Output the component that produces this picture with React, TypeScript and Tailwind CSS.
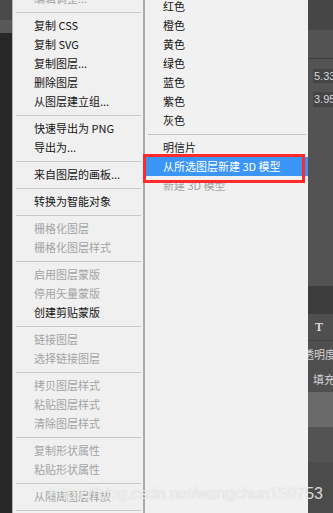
const leftItems: (string | { t: string; d?: boolean })[] = [
  { t: "编辑调整...", d: true },
  "-",
  { t: "复制 CSS" },
  { t: "复制 SVG" },
  { t: "复制图层..." },
  { t: "删除图层" },
  { t: "从图层建立组..." },
  "-",
  { t: "快速导出为 PNG" },
  { t: "导出为..." },
  "-",
  { t: "来自图层的画板..." },
  "-",
  { t: "转换为智能对象" },
  "-",
  { t: "栅格化图层", d: true },
  { t: "栅格化图层样式", d: true },
  "-",
  { t: "启用图层蒙版", d: true },
  { t: "停用矢量蒙版", d: true },
  { t: "创建剪贴蒙版" },
  "-",
  { t: "链接图层", d: true },
  { t: "选择链接图层", d: true },
  "-",
  { t: "拷贝图层样式", d: true },
  { t: "粘贴图层样式", d: true },
  { t: "清除图层样式", d: true },
  "-",
  { t: "复制形状属性", d: true },
  { t: "粘贴形状属性", d: true },
  "-",
  { t: "从隔离图层释放", d: true },
  "-",
];

const colors = ["红色", "橙色", "黄色", "绿色", "蓝色", "紫色", "灰色"];

const Sep = () => (
  <div className="h-[8px] flex flex-col justify-center pl-[3px] pr-[2px]">
    <div className="h-px bg-[#c6c6c6]" />
  </div>
);

const Item = ({ label, disabled, pad }: { label: string; disabled?: boolean; pad: string }) => (
  <div
    className={`h-[19px] flex items-center whitespace-nowrap text-[11px] leading-none ${pad} ${
      disabled ? "text-[#a4a4a4]" : "text-[#151515]"
    }`}
  >
    {label}
  </div>
);

export default function App() {
  return (
    <div className="relative w-[333px] h-[513px] overflow-hidden flex font-['Noto_Sans_CJK_SC','Microsoft_YaHei',sans-serif] bg-[#282828]">
      {/* left edge of the canvas */}
      <div className="w-[12px] flex flex-col">
        <div className="h-[20px] bg-[#4a4a4a]" />
        <div className="h-[13px] bg-[#585858]" />
        <div className="flex-1 bg-[#272727]" />
      </div>

      {/* main context menu */}
      <div className="w-[131px] bg-[#f0f0f0] border-l border-[#b4b4b4] overflow-hidden">
        <div className="-mt-[11px]">
          {leftItems.map((it, i) =>
            it === "-" ? (
              <Sep key={i} />
            ) : (
              <Item key={i} label={(it as any).t} disabled={(it as any).d} pad="pl-[21px]" />
            )
          )}
        </div>
      </div>

      {/* colour submenu */}
      <div className="w-[165px] bg-[#f1f1f1] border-l-2 border-[#a9a9a9] overflow-hidden">
        <div className="-mt-[3px]">
          {colors.map((c) => (
            <Item key={c} label={c} pad="pl-[18px]" />
          ))}
          <Sep />
          <Item label="明信片" pad="pl-[18px]" />
          <div className="h-[19px] flex items-center pl-[18px] bg-[#3a95f4] text-white text-[11px] leading-none whitespace-nowrap">
            从所选图层新建 3D 模型
          </div>
          <Item label="新建 3D 模型" disabled pad="pl-[18px]" />
        </div>
      </div>

      {/* properties panel peeking on the right */}
      <div className="w-[25px] flex flex-col bg-[#535353] text-[#d6d6d6] text-[11px] leading-none">
        <div className="h-[30px] bg-[#464646]" />
        <div className="h-[29px] border-b border-[#3e3e3e]" />
        <div className="h-[10px]" />
        <div className="h-[14px] ml-[5px] bg-[#454545] flex items-center pl-[1px] font-['Liberation_Sans',sans-serif]">5.33</div>
        <div className="h-[9px]" />
        <div className="h-[15px] ml-[5px] bg-[#454545] flex items-center pl-[1px] font-['Liberation_Sans',sans-serif]">3.95</div>
        <div className="h-[179px]" />
        <div className="h-[28px] bg-[#3d3d3d]" />
        <div className="h-[27px] bg-[#4f4f4f] border-b border-[#424242] flex items-center pl-[7px] font-['Liberation_Serif',serif] font-bold text-[12px] text-[#dcdcdc]">
          T
        </div>
        <div className="h-[26px] bg-[#4f4f4f] flex items-center overflow-hidden whitespace-nowrap">
          <span className="-ml-[5px]">透明度</span>
        </div>
        <div className="h-[25px] bg-[#4f4f4f] flex items-center pl-[5px] whitespace-nowrap overflow-hidden">填充</div>
        <div className="h-[35px] bg-[#6a6a6a]" />
        <div className="h-[35px] bg-[#535353]" />
        <div className="flex-1 bg-[#4b4b4b]" />
      </div>

      {/* annotation box */}
      <div className="absolute left-[143px] top-[154px] w-[162px] h-[29px] border-[3px] border-[#ff2b2b]" />

      {/* watermark */}
      <div className="absolute left-[49px] top-[485px] text-[16px] leading-[18px] text-white/80 font-['Liberation_Sans',sans-serif] whitespace-nowrap [text-shadow:0_0_1px_rgba(0,0,0,0.25)]">
        https://blog.csdn.net/wangchun159753
      </div>
    </div>
  );
}
